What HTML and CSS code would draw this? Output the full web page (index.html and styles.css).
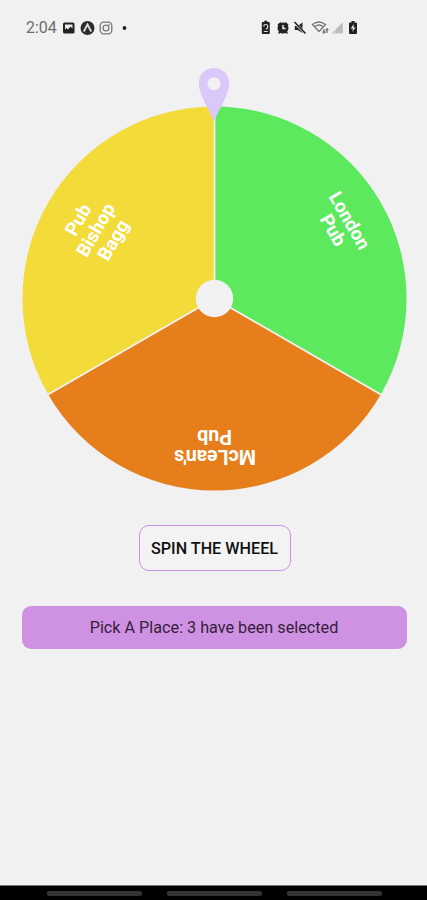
FILE: index.html
```html
<!DOCTYPE html>
<html lang="en">
<head>
<meta charset="utf-8">
<title>Spin the wheel</title>
<link rel="stylesheet" href="styles.css">
</head>
<body>
<header class="status">
  <span class="time">2:04</span>
  <svg class="left-icons" width="68" height="20" viewBox="0 0 68 20">
    <rect x="1" y="4.500" width="11.500" height="11" rx="1.500" fill="#222"/>
    <path d="M3 6.500h7.500v4l-2-2-2.500 3-1.500-1.500L3 11.500z" fill="#eee"/>
    <circle cx="25.500" cy="10" r="7" fill="#2c2c2c"/>
    <path d="M21.800 13.500 25.500 6.500l3.700 7" fill="none" stroke="#ddd" stroke-width="1.800"/>
    <g fill="none" stroke="#777" stroke-width="1.300">
      <rect x="38.200" y="4.200" width="11.600" height="11.600" rx="3.500"/>
      <circle cx="44" cy="10" r="2.900"/>
    </g>
    <circle cx="47.200" cy="6.800" r=".8" fill="#777"/>
    <circle cx="62.500" cy="10" r="1.900" fill="#222"/>
  </svg>
  <svg class="right-icons" width="100" height="20" viewBox="0 0 100 20">
    <g transform="translate(-1.200)">
      <path d="M4 4h1.500V2.800h3V4H10q1 0 1 1v10q0 1-1 1H4q-1 0-1-1V5q0-1 1-1z" fill="#222"/>
      <path d="M5 8.500q0-2 2-2t2 2-2 2.500M9 13.500H5" fill="none" stroke="#ddd" stroke-width="1.200"/>
    </g>
    <g transform="translate(-1)">
      <circle cx="24" cy="10" r="5.500" fill="#222"/>
      <path fill="#222" d="m18.500 6.500 3-2.500 1 1.200-3 2.500zM29.500 6.500l-3-2.500-1 1.200 3 2.500zM19 15l2-2 1 1-2 2zM29 15l-2-2-1 1 2 2z"/>
      <path d="M24 7v3.500h2.500" fill="none" stroke="#eee" stroke-width="1.500"/>
    </g>
    <path d="M34.800 8h3L42.500 4.500V15L37.800 12h-3z" fill="#222"/>
    <path d="m34.500 4.500 11 11" stroke="#f0f0f0" stroke-width="2.500"/>
    <path d="m34.500 4 11 11.500" stroke="#222" stroke-width="1.600"/>
    <g fill="none" stroke="#777" stroke-width="1.300">
      <path d="M52.500 6.500q6.500-5 13 0L59 13.500zM55 8.500q4-3 8 0"/>
      <path d="M64 11v4m-1.500-1.500L64 15l1.500-1.500M67 15v-4m-1.200 1.300L67 10.800l1.300 1.500"/>
    </g>
    <path d="M71.500 15.500 83 4v11.500z" fill="#c8c8c8"/>
    <path d="M77 15V10.500m2 4.500V8.500m2 6.500V6.500" stroke="#aaa" stroke-width=".8"/>
    <path d="M90 4.500h1.500V3h3v1.500H96q1 0 1 1V15q0 1-1 1h-6q-1 0-1-1V5.500q0-1 1-1z" fill="#222"/>
    <path d="m93.800 6-3 4.500H93l-.8 3.500 3.300-4.500h-2z" fill="#eee"/>
  </svg>
</header>
<main>
  <svg class="wheel" width="427" height="440" viewBox="-214.500 -238.500 427 440">
    <path fill="#5ce95e" d="M0 0V-192A192 192 0 0 1 166.300 96z"/>
    <path fill="#e57e1b" d="M0 0 166.300 96A192 192 0 0 1-166.300 96z"/>
    <path fill="#f3db3a" d="M0 0-166.300 96A192 192 0 0 1 0-192z"/>
    <path class="spokes" d="M0 0V-193M0 0 167.200 96.500M0 0-167.200 96.500"/>
    <circle r="18.700" fill="#f1f1f1"/>
    <g class="labels">
      <g transform="rotate(60)"><text y="-149.500">London</text><text y="-130.500">Pub</text></g>
      <g class="wide" transform="rotate(180)"><text x="-.5" y="-151">McLean's</text><text y="-131.500">Pub</text></g>
      <g transform="rotate(-60)"><text y="-151">Pub</text><text y="-130.800">Bishop</text><text y="-110.500">Bagg</text></g>
    </g>
    <path fill="#dac8fb" d="M-.5-230.500c-8.700 0-15.200 6.500-15.200 15.200 0 11 9.200 24 15.200 38.300 6-14.300 15.200-27.300 15.200-38.300 0-8.700-6.500-15.200-15.200-15.200z"/>
    <circle cx="-.5" cy="-214.800" r="6.500" fill="#f1f1f1"/>
  </svg>
  <button class="spin">SPIN THE WHEEL</button>
  <button class="pick">Pick A Place: 3 have been selected</button>
</main>
<footer class="nav"><i></i><i></i><i></i></footer>
</body>
</html>
```
FILE: styles.css
```css
* { box-sizing: border-box; }
body {
  margin: 0;
  height: 900px;
  display: flex;
  flex-direction: column;
  background: #f1f1f1;
  font-family: Roboto, sans-serif;
  overflow: hidden;
}
.status {
  height: 60px;
  padding: 18px 67px 0 26px;
  display: flex;
  align-items: flex-start;
}
.time {
  width: 36px;
  font-size: 16px;
  line-height: 20px;
  color: #6c6c6c;
}
.right-icons { margin-left: auto; }
main {
  flex: 1;
  display: flex;
  flex-direction: column;
  align-items: center;
}
.wheel { display: block; flex: none; }
.spokes { fill: none; stroke: #f1f1f1; stroke-width: 1.8; }
.labels text {
  fill: #fff;
  font-size: 18.8px;
  font-weight: 700;
  text-anchor: middle;
}
.labels .wide text { font-size: 19.7px; }
button { font-family: inherit; padding: 0; }
.spin {
  width: 152px;
  height: 46px;
  margin: 25px 0 0 2px;
  border: 1.5px solid #c892e6;
  border-radius: 10px;
  background: #f3f3f3;
  color: #111;
  font-size: 16.2px;
  font-weight: 500;
}
.pick {
  width: 385px;
  height: 43px;
  margin: 34.5px 0 0 1px;
  border: 0;
  border-radius: 9px;
  background: #cf92e3;
  color: #35203c;
  font-size: 16.2px;
}
.nav {
  height: 15px;
  padding: 5px 45px 0 47px;
  display: flex;
  justify-content: space-between;
  align-items: flex-start;
  background: #000;
  border-top: 1px solid #777;
}
.nav i {
  width: 95px;
  height: 5px;
  border-radius: 2px;
  background: #333;
}
```
